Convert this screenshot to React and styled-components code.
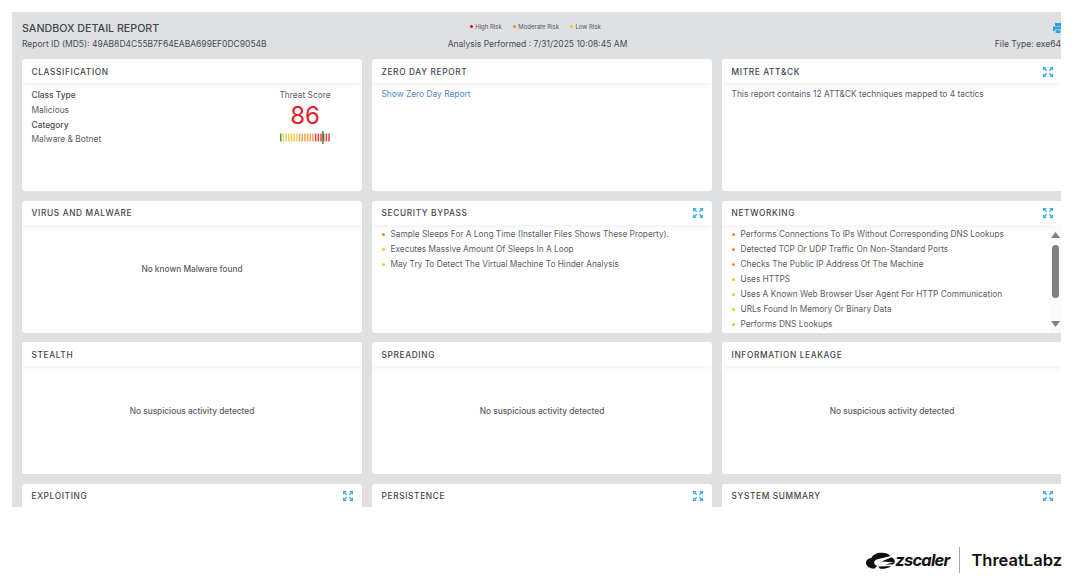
import React from "react";
import styled, { createGlobalStyle } from "styled-components";

const GlobalStyle = createGlobalStyle`
  html, body {
    margin: 0;
    padding: 0;
    background: #fff;
    font-family: Inter, "Liberation Sans", sans-serif;
  }
`;

const Page = styled.div`
  width: 1080px;
  height: 585px;
  overflow: hidden;
  padding: 12px 0 0 12px;
  box-sizing: border-box;
`;

const Panel = styled.div`
  width: 1049px;
  height: 495px;
  overflow: hidden;
  background: #dfe0e2;
  padding: 0 0 0 10px;
  box-sizing: border-box;
`;

const Header = styled.header`
  width: 1039px;
  height: 47px;
  box-sizing: border-box;
  display: grid;
  grid-template-columns: 1fr auto 1fr;
  grid-template-rows: 20px 14px;
  padding-top: 5px;
  color: #4a4c52;
`;

const Title = styled.h1`
  margin: 0;
  font-size: 10.7px;
  font-weight: 500;
  line-height: 24px;
  color: #44464c;
`;

const Legend = styled.div`
  display: flex;
  align-items: center;
  gap: 11px;
  height: 19px;
  padding-left: 22px;
  font-size: 6px;
  white-space: nowrap;
  color: #55575c;
`;

const LegendItem = styled.span`
  display: flex;
  align-items: center;
  gap: 2px;
  &::before {
    content: "";
    width: 3.5px;
    height: 3.5px;
    border-radius: 50%;
    background: ${(p) => p.$color};
  }
`;

const PrintSlot = styled.div`
  display: flex;
  justify-content: flex-end;
  color: #2e9fdc;
  padding-top: 6px;
  margin-right: -2px;
`;

const MetaLeft = styled.div`
  font-size: 8.5px;
  line-height: 14px;
`;

const MetaCenter = styled.div`
  font-size: 8.5px;
  line-height: 14px;
  text-align: center;
  padding-right: 8px;
`;

const MetaRight = styled.div`
  font-size: 8.5px;
  line-height: 14px;
  text-align: right;
`;

const CardGrid = styled.div`
  display: grid;
  grid-template-columns: repeat(3, 340px);
  grid-auto-rows: 132px;
  column-gap: 10px;
  row-gap: 9.5px;
`;

const CardBox = styled.section`
  position: relative;
  background: #fff;
  border-radius: 3px;
  overflow: hidden;
  display: flex;
  flex-direction: column;
`;

const CardHead = styled.div`
  flex: none;
  height: 24px;
  box-sizing: border-box;
  display: flex;
  align-items: center;
  justify-content: space-between;
  padding: 1px 9px 0 9.5px;
  box-shadow: 0 2px 6px rgba(0, 0, 0, 0.06);
`;

const CardTitle = styled.h2`
  margin: 0;
  font-size: 8.3px;
  font-weight: 500;
  letter-spacing: 0.65px;
  color: #44464c;
`;

const CardBody = styled.div`
  flex: 1;
  min-height: 0;
  padding: 4px 9.5px;
  font-size: 8.4px;
  line-height: 15px;
  color: #5b5d63;
`;

const CenteredBody = styled(CardBody)`
  display: flex;
  align-items: center;
  justify-content: center;
  padding: 0 0 18px;
  font-size: 8.3px;
  font-weight: 500;
`;

const ClassifyBody = styled(CardBody)`
  display: flex;
  justify-content: space-between;
  padding-right: 32px;
  padding-top: 5px;
  line-height: 14.5px;
`;

const Field = styled.div`
  margin-bottom: 0.5px;
`;

const FieldLabel = styled.div`
  font-weight: 500;
  color: #4a4c52;
`;

const Score = styled.div`
  display: flex;
  flex-direction: column;
  align-items: center;
  width: 50px;
  white-space: nowrap;
`;

const ScoreNumber = styled.div`
  font-size: 24px;
  line-height: 26px;
  color: #e0202a;
  margin-bottom: 2px;
`;

const Link = styled.a`
  color: #4f86c6;
`;

const RiskList = styled.ul`
  margin: -1.5px 0 0;
  padding: 0;
  list-style: none;
  font-size: 8.3px;
`;

const RiskItem = styled.li`
  display: flex;
  align-items: center;
  gap: 5.5px;
  white-space: nowrap;
  &::before {
    content: "";
    flex: none;
    width: 3.5px;
    height: 3.5px;
    border-radius: 50%;
    background: ${(p) => (p.$level === "moderate" ? "#ee8a1d" : "#f7c325")};
  }
`;

const ScrollTrack = styled.div`
  position: absolute;
  top: 24px;
  right: 0;
  bottom: 0;
  width: 12px;
  background: #fafafa;
  color: #7f7f7f;
  display: flex;
  flex-direction: column;
  align-items: center;
  padding: 7px 2px 0 0;
  box-sizing: border-box;
`;

const ScrollThumb = styled.div`
  width: 7px;
  height: 53px;
  margin: 7px 0 23px;
  border-radius: 4px;
  background: #808080;
`;

const Footer = styled.footer`
  display: flex;
  justify-content: flex-end;
  align-items: center;
  width: 1050px;
  height: 28px;
  margin-top: 39px;
`;

const Brand = styled.span`
  font-size: 16.5px;
  font-style: italic;
  font-weight: 700;
  letter-spacing: -0.8px;
  color: #111;
  margin-left: 0;
`;

const Divider = styled.span`
  width: 1px;
  height: 26px;
  margin: 0 11px 0 10px;
  background: #a8a8a8;
`;

const Labz = styled.span`
  font-size: 16.5px;
  font-weight: 600;
  color: #111;
`;

function ExpandIcon() {
  return (
    <svg width="10" height="10" viewBox="0 0 10 10" fill="#3fade8">
      <path d="M0 0h3.8L0 3.8zM10 0v3.8L6.2 0zM0 10V6.2L3.8 10zM10 10H6.2L10 6.2z" />
      <path d="M1.2 1.2L3.7 3.7M8.8 1.2L6.3 3.7M1.2 8.8L3.7 6.3M8.8 8.8L6.3 6.3" stroke="#3fade8" strokeWidth="1.5" />
    </svg>
  );
}

function PrintIcon() {
  return (
    <svg width="10" height="10" viewBox="0 0 10 10" fill="currentColor">
      <path d="M2 0h6v3H2zM0 3.6h10V8H8.2V6.4H1.8V8H0zM2.6 7.2h4.8V10H2.6z" />
    </svg>
  );
}

const gaugeColor = (i) => {
  if (i < 1) return "#4da64a";
  if (i < 7) return "#f4d35c";
  if (i < 13) return "#f3a95f";
  return "#e44f50";
};

function Gauge() {
  const ticks = Array.from({ length: 19 }, (_, i) => i);
  return (
    <svg width="50" height="13" viewBox="0 0 50 13">
      {ticks.map((i) => (
        <rect key={i} x={i * 2.68} y="2.5" width="1.6" height="8" fill={gaugeColor(i)} />
      ))}
      <rect x="42.2" y="0" width="1.4" height="13" fill="#2e8b3a" />
    </svg>
  );
}

function Zlogo() {
  return (
    <svg width="29" height="17" viewBox="0 0 31 18" fill="#111">
      <path d="M0 11.5C0 8.2 3 6.4 5.6 6.6 7.4 2.6 12 .6 17 .8c4.4.2 7.6 1.5 9.4 3.4L12.2 7.6c-2.2.5-3.2 1.6-3.4 3.4-.2 2 1 3.4 3 3.8l-3 3C3.6 17.6 0 15.2 0 11.5z" />
      <path d="M27.4 5.4c2.2 1.2 3.4 2.8 3.4 4.6 0 1.4-.8 2.6-2.2 3.2l-8 .2 9-2.6-13.2-.8zM13 15.4l14-.6c-2.2 2-6.6 3.2-12 3z" />
    </svg>
  );
}

function Card({ title, expand, children }) {
  return (
    <CardBox>
      <CardHead>
        <CardTitle>{title}</CardTitle>
        {expand && <ExpandIcon />}
      </CardHead>
      {children}
    </CardBox>
  );
}

function Risks({ items }) {
  return (
    <RiskList>
      {items.map(([level, text]) => (
        <RiskItem key={text} $level={level}>{text}</RiskItem>
      ))}
    </RiskList>
  );
}

const bypass = [
  ["moderate", "Sample Sleeps For A Long Time (Installer Files Shows These Property)."],
  ["low", "Executes Massive Amount Of Sleeps In A Loop"],
  ["low", "May Try To Detect The Virtual Machine To Hinder Analysis"],
];

const networking = [
  ["moderate", "Performs Connections To IPs Without Corresponding DNS Lookups"],
  ["moderate", "Detected TCP Or UDP Traffic On Non-Standard Ports"],
  ["moderate", "Checks The Public IP Address Of The Machine"],
  ["low", "Uses HTTPS"],
  ["low", "Uses A Known Web Browser User Agent For HTTP Communication"],
  ["low", "URLs Found In Memory Or Binary Data"],
  ["low", "Performs DNS Lookups"],
];

export default function App() {
  return (
    <Page>
      <GlobalStyle />
      <Panel>
        <Header>
          <Title>SANDBOX DETAIL REPORT</Title>
          <Legend>
            <LegendItem $color="#d4001a">High Risk</LegendItem>
            <LegendItem $color="#ee8a1d">Moderate Risk</LegendItem>
            <LegendItem $color="#f7c325">Low Risk</LegendItem>
          </Legend>
          <PrintSlot><PrintIcon /></PrintSlot>
          <MetaLeft>Report ID (MD5): 49AB8D4C55B7F64EABA699EF0DC9054B</MetaLeft>
          <MetaCenter>Analysis Performed : 7/31/2025 10:08:45 AM</MetaCenter>
          <MetaRight>File Type: exe64</MetaRight>
        </Header>
        <CardGrid>
          <Card title="CLASSIFICATION">
            <ClassifyBody>
              <div>
                <FieldLabel>Class Type</FieldLabel>
                <Field>Malicious</Field>
                <FieldLabel>Category</FieldLabel>
                <Field>Malware &amp; Botnet</Field>
              </div>
              <Score>
                <div>Threat Score</div>
                <ScoreNumber>86</ScoreNumber>
                <Gauge />
              </Score>
            </ClassifyBody>
          </Card>
          <Card title="ZERO DAY REPORT">
            <CardBody><Link>Show Zero Day Report</Link></CardBody>
          </Card>
          <Card title="MITRE ATT&CK" expand>
            <CardBody>This report contains 12 ATT&amp;CK techniques mapped to 4 tactics</CardBody>
          </Card>
          <Card title="VIRUS AND MALWARE">
            <CenteredBody>No known Malware found</CenteredBody>
          </Card>
          <Card title="SECURITY BYPASS" expand>
            <CardBody><Risks items={bypass} /></CardBody>
          </Card>
          <Card title="NETWORKING" expand>
            <CardBody><Risks items={networking} /></CardBody>
            <ScrollTrack>
              <svg width="9" height="6" viewBox="0 0 9 6" fill="currentColor"><path d="M4.5 0L9 6H0z" /></svg>
              <ScrollThumb />
              <svg width="9" height="6" viewBox="0 0 9 6" fill="currentColor"><path d="M0 0h9L4.5 6z" /></svg>
            </ScrollTrack>
          </Card>
          <Card title="STEALTH">
            <CenteredBody>No suspicious activity detected</CenteredBody>
          </Card>
          <Card title="SPREADING">
            <CenteredBody>No suspicious activity detected</CenteredBody>
          </Card>
          <Card title="INFORMATION LEAKAGE">
            <CenteredBody>No suspicious activity detected</CenteredBody>
          </Card>
          <Card title="EXPLOITING" expand />
          <Card title="PERSISTENCE" expand />
          <Card title="SYSTEM SUMMARY" expand />
        </CardGrid>
      </Panel>
      <Footer>
        <Zlogo />
        <Brand>zscaler</Brand>
        <Divider />
        <Labz>ThreatLabz</Labz>
      </Footer>
    </Page>
  );
}
